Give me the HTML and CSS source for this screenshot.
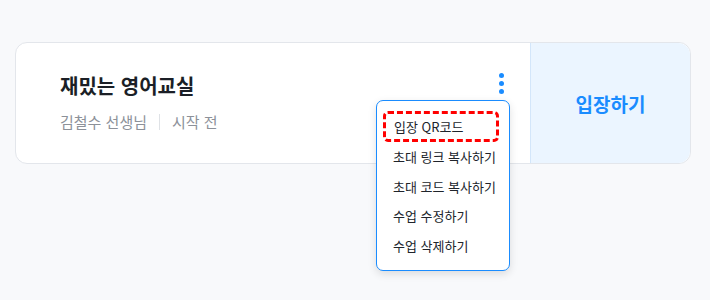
FILE: index.html
```html
<!DOCTYPE html>
<html lang="ko">
<head>
  <meta charset="UTF-8">
  <title>수업 카드</title>
  <link rel="stylesheet" href="styles.css">
</head>
<body>
  <div class="lesson">
    <div class="card">
      <div class="info">
        <h2 class="title">재밌는 영어교실</h2>
        <div class="meta">
          <span>김철수 선생님</span>
          <span class="divider"></span>
          <span>시작 전</span>
        </div>
      </div>
      <a class="enter">입장하기</a>
    </div>
    <button class="more" aria-label="더보기">
      <span></span><span></span><span></span>
    </button>
    <ul class="menu">
      <li class="focused">입장 QR코드</li>
      <li>초대 링크 복사하기</li>
      <li>초대 코드 복사하기</li>
      <li>수업 수정하기</li>
      <li>수업 삭제하기</li>
    </ul>
  </div>
</body>
</html>
```

FILE: styles.css
```css
body {
  margin: 0;
  min-height: 100vh;
  overflow: hidden;
  background: #f8f9fb;
  font-family: "Noto Sans CJK KR", "Noto Sans", sans-serif;
}
.lesson {
  position: relative;
  width: 676px;
  margin: 42px 0 0 15px;
}
.card {
  display: flex;
  height: 120px;
  background: #fff;
  border: 1px solid #e3e6eb;
  border-radius: 12px;
}
.info {
  flex: 1;
  padding: 28px 0 0 44px;
}
.title {
  margin: 0;
  font-size: 20px;
  font-weight: 700;
  color: #1b1f26;
  line-height: 30px;
}
.meta {
  display: flex;
  align-items: center;
  gap: 12px;
  margin-top: 10px;
  font-size: 15px;
  color: #8c9199;
  line-height: 22px;
}
.divider {
  width: 1px;
  height: 16px;
  background: #dfe2e6;
}
.more {
  position: absolute;
  top: 31px;
  left: 484px;
  display: flex;
  flex-direction: column;
  gap: 3px;
  padding: 0;
  border: none;
  background: none;
}
.more span {
  width: 5px;
  height: 5px;
  border-radius: 50%;
  background: #1a8cff;
}
.menu {
  position: absolute;
  top: 58px;
  left: 361px;
  width: 132px;
  margin: 0;
  padding: 8px 0 10px;
  list-style: none;
  background: #fff;
  border: 1px solid #1a8cff;
  border-radius: 7px;
  box-shadow: 0 3px 8px rgba(0, 0, 0, 0.12);
  z-index: 2;
}
.menu li {
  height: 29.5px;
  line-height: 29.5px;
  padding-left: 16px;
  font-size: 13px;
  color: #20242b;
}
.menu li.focused {
  margin: 5px 13px 3px 9px;
  padding-left: 8px;
  height: 25px;
  line-height: 25px;
  outline: 3px dashed #f00;
  border-radius: 2px;
}
.enter {
  width: 159px;
  display: flex;
  align-items: center;
  justify-content: center;
  background: #ebf5ff;
  border-left: 1px solid #d3e6fa;
  border-radius: 0 12px 12px 0;
  color: #1a8cff;
  font-size: 19px;
  font-weight: 700;
}
```
